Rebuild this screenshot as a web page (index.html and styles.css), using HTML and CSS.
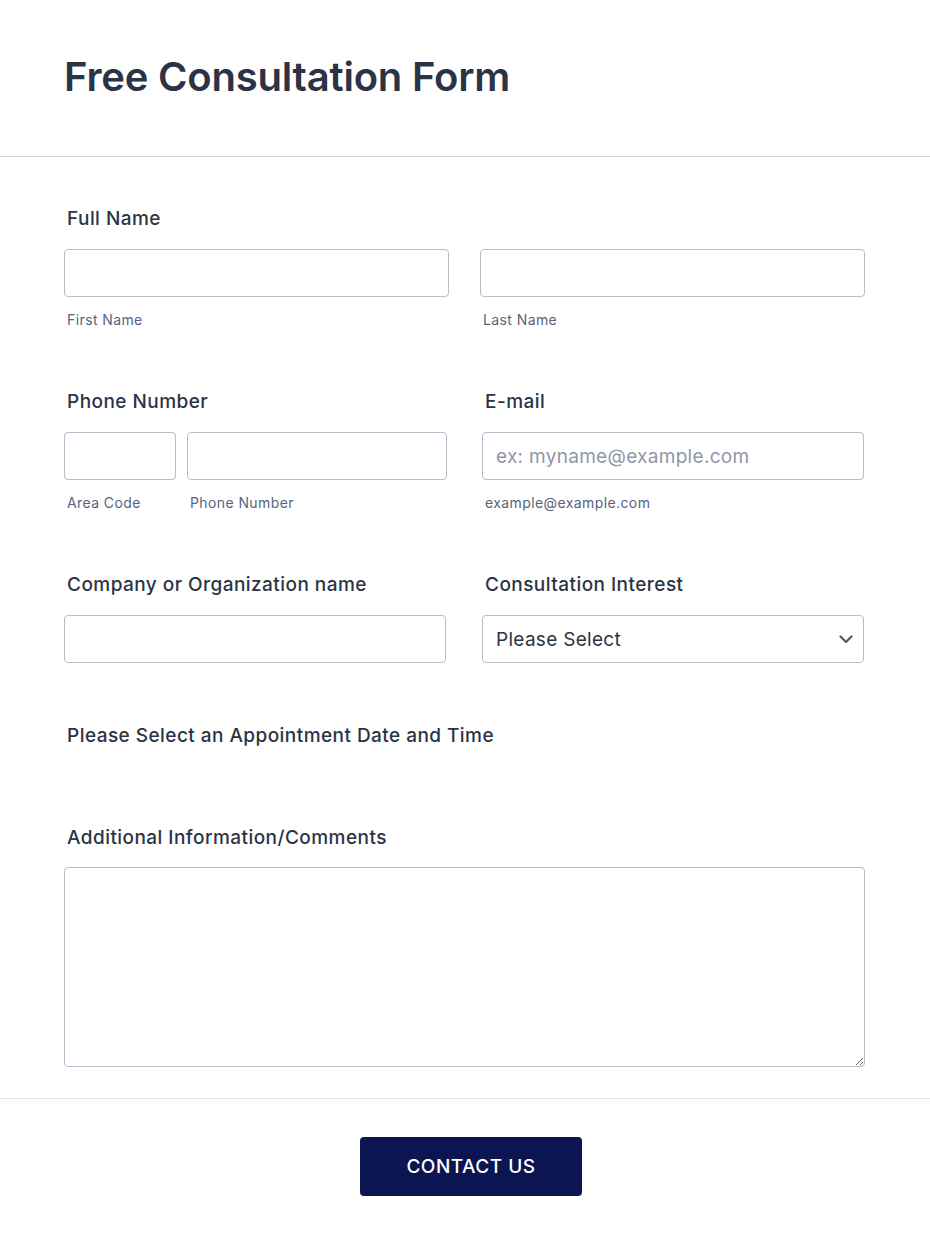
FILE: index.html
```html
<!DOCTYPE html>
<html lang="en">
<head>
    <meta charset="UTF-8">
    <meta name="viewport" content="width=device-width, initial-scale=1.0">
    <title>Free Consultation Form</title>
    <link rel="stylesheet" href="styles.css">
</head>
<body>
    <form class="form">
        <div class="form-header">
            <h1>Free Consultation Form</h1>
        </div>

        <div class="form-body">
            <!-- Full name -->
            <div class="field">
                <label class="field-label">Full Name</label>
                <div class="row row-name">
                    <div class="sub">
                        <input type="text" class="input">
                        <span class="sub-label">First Name</span>
                    </div>
                    <div class="sub">
                        <input type="text" class="input">
                        <span class="sub-label">Last Name</span>
                    </div>
                </div>
            </div>

            <!-- Phone + email -->
            <div class="row row-half">
                <div class="field">
                    <label class="field-label">Phone Number</label>
                    <div class="row row-phone">
                        <div class="sub">
                            <input type="tel" class="input">
                            <span class="sub-label">Area Code</span>
                        </div>
                        <div class="sub">
                            <input type="tel" class="input">
                            <span class="sub-label">Phone Number</span>
                        </div>
                    </div>
                </div>
                <div class="field">
                    <label class="field-label">E-mail</label>
                    <div class="sub">
                        <input type="email" class="input" placeholder="ex: myname@example.com">
                        <span class="sub-label">example@example.com</span>
                    </div>
                </div>
            </div>

            <!-- Company + interest -->
            <div class="row row-half">
                <div class="field">
                    <label class="field-label">Company or Organization name</label>
                    <input type="text" class="input">
                </div>
                <div class="field">
                    <label class="field-label">Consultation Interest</label>
                    <div class="select">
                        <span>Please Select</span>
                        <svg width="14" height="9" viewBox="0 0 14 9">
                            <path d="M1.5 1.5 L7 7 L12.5 1.5" fill="none" stroke="#4f5878" stroke-width="2.2" stroke-linecap="round" stroke-linejoin="round"/>
                        </svg>
                    </div>
                </div>
            </div>

            <!-- Appointment -->
            <div class="field field-appointment">
                <label class="field-label">Please Select an Appointment Date and Time</label>
            </div>

            <!-- Comments -->
            <div class="field field-last">
                <label class="field-label">Additional Information/Comments</label>
                <textarea class="input textarea"></textarea>
            </div>
        </div>

        <div class="form-footer">
            <button type="button" class="submit">CONTACT US</button>
        </div>
    </form>
</body>
</html>
```

FILE: styles.css
```css
/* General Styling */
body {
    margin: 0;
    padding: 0;
    background-color: #FFFFFF;
    color: #2C3345;
    font-family: 'Inter', 'Noto Sans', sans-serif;
}

.form {
    width: 930px;
}

.form-header {
    height: 157px;
    padding-left: 64px;
    border-bottom: 1px solid #D3D6E0;
    box-sizing: border-box;
    display: flex;
    align-items: center;
}

.form-header h1 {
    margin: 0 0 3px 0;
    font-size: 40px;
    font-weight: 600;
    letter-spacing: -0.2px;
    color: #2C3345;
}

.form-body {
    padding: 51px 65px 31px 64px;
}

.field {
    display: flex;
    flex-direction: column;
    margin-bottom: 62px;
}

.field-appointment {
    margin-bottom: 61px;
}

.field-last {
    margin-bottom: 0;
}

.field-label {
    padding-left: 3px;
    font-size: 19px;
    line-height: 22px;
    font-weight: 500;
    letter-spacing: 0.45px;
    color: #2C3345;
    margin-bottom: 19px;
}

.field-last .field-label {
    margin-bottom: 18px;
}

.row {
    display: grid;
}

.row-name {
    grid-template-columns: 385px 385px;
    column-gap: 31px;
}

.row-half {
    grid-template-columns: 382px 382px;
    column-gap: 36px;
}

.row-phone {
    grid-template-columns: 112px 260px;
    column-gap: 11px;
}

.sub {
    display: flex;
    flex-direction: column;
}

.sub-label {
    padding-left: 3px;
    margin-top: 14px;
    font-size: 14px;
    line-height: 18px;
    letter-spacing: 0.4px;
    color: #57647E;
}

.input {
    height: 48px;
    width: 100%;
    box-sizing: border-box;
    border: 1px solid #B8BDCC;
    border-radius: 4px;
    padding: 0 13px;
    font-family: inherit;
    font-size: 19px;
    letter-spacing: 0.3px;
    color: #2C3345;
    background-color: #FFFFFF;
    outline: none;
}

.input::placeholder {
    color: #8F96A8;
}

.select {
    height: 48px;
    box-sizing: border-box;
    border: 1px solid #B8BDCC;
    border-radius: 4px;
    padding: 0 10px 0 13px;
    display: flex;
    align-items: center;
    justify-content: space-between;
    font-size: 19px;
    letter-spacing: 0.3px;
    color: #2C3345;
}

.textarea {
    height: 200px;
    resize: vertical;
    display: block;
}

.form-footer {
    border-top: 1px solid #E1E4EC;
    padding: 38px 0 50px 12px;
    display: flex;
    justify-content: center;
}

.submit {
    width: 222px;
    height: 59px;
    border: none;
    border-radius: 4px;
    background-color: #0B1552;
    color: #FFFFFF;
    font-family: 'Inter', sans-serif;
    font-size: 19px;
    font-weight: 500;
    letter-spacing: 0.5px;
    cursor: pointer;
}
```
